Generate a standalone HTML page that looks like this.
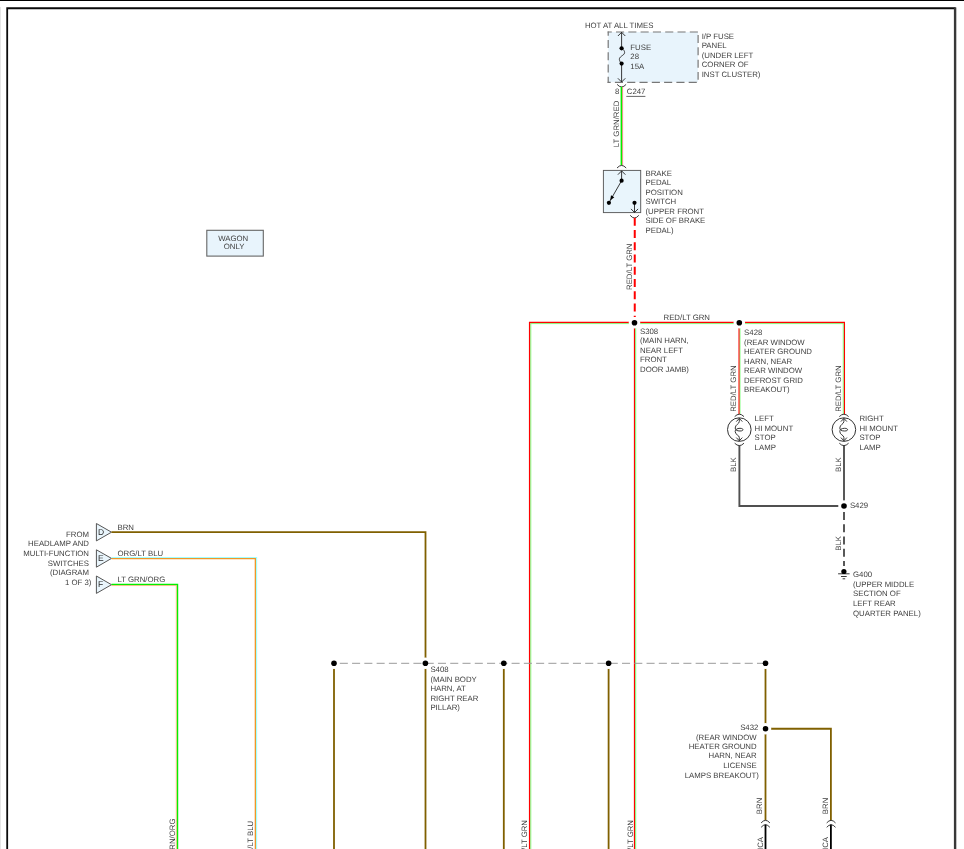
<!DOCTYPE html>
<html>
<head>
<meta charset="utf-8">
<title>Wiring Diagram</title>
<style>
html,body{margin:0;padding:0;background:#fff;}
body{width:964px;height:849px;overflow:hidden;}
svg{display:block;filter:blur(0.3px);}
text{font-family:"Liberation Sans",sans-serif;font-size:7.8px;fill:#404040;text-rendering:geometricPrecision;}
.w{fill:none;stroke-linecap:butt;}
.brn{stroke:#806000;stroke-width:1.8;}
.blk{stroke:#505050;stroke-width:1.9;}
.dot{fill:#000;stroke:#fff;stroke-width:1.6;}
.sym{fill:none;stroke:#222;stroke-width:0.9;}
</style>
</head>
<body>
<svg width="964" height="849" viewBox="0 0 964 849">
<!-- page frame -->
<rect x="0" y="0" width="964" height="1" fill="#000"/>
<rect x="0" y="7" width="0.9" height="842" fill="#e4e4e4"/>
<path d="M7.2 849 V8.25 H955.5" fill="none" stroke="#0a0a0a" stroke-width="1.8"/>
<rect x="953.9" y="7.4" width="2.4" height="842" fill="#383838"/>

<!-- FUSE PANEL -->
<g id="fuse">
<rect x="608.2" y="32" width="89.8" height="50.2" fill="#e8f4fc"/>
<g fill="none" stroke="#777" stroke-width="1.2">
<path d="M607.6 32 H698.1" stroke-dasharray="8.1 4.2" stroke-dashoffset="3.9"/>
<path d="M607.6 82.35 H697" stroke-dasharray="8.1 4.2" stroke-dashoffset="5"/>
<path d="M608.2 31.6 V82.9" stroke-dasharray="8.1 4.15" stroke-dashoffset="3.9"/>
<path d="M698.1 35.1 V79.7" stroke-dasharray="8 4.27"/>
</g>
<path class="sym" d="M621.6 32.3 V48 M621.6 63.6 V82 M617.9 36 L621.6 32.3 L625.3 36 M617.9 78.3 L621.6 82 L625.3 78.3"/>
<path class="sym" d="M621.6 48.3 C623.5 49.5 624.7 51 624.6 52.6 C624.4 54.6 622.6 55.2 621.3 56.3 C620 57.4 619.2 58.2 619.4 59.6 C619.6 61.2 620.6 62.4 621.6 63.6" stroke-width="1"/>
<circle cx="621.6" cy="48.3" r="2.1" fill="#000"/>
<circle cx="621.6" cy="63.6" r="2.1" fill="#000"/>
<path class="sym" d="M617.1 84.4 Q621.6 89.5 626.1 84.4"/>
</g>
<text x="584.9" y="28">HOT AT ALL TIMES</text>
<text x="630.3" y="50">FUSE</text>
<text x="630.3" y="59">28</text>
<text x="630.3" y="69">15A</text>
<text x="701.7" y="39">I/P FUSE</text>
<text x="701.7" y="48">PANEL</text>
<text x="701.7" y="58">(UNDER LEFT</text>
<text x="701.7" y="67">CORNER OF</text>
<text x="701.7" y="77">INST CLUSTER)</text>
<text x="615" y="94">8</text>
<text x="626.8" y="94">C247</text>
<line x1="626.3" y1="96.4" x2="645.4" y2="96.4" stroke="#555" stroke-width="0.9"/>

<!-- LT GRN/RED wire -->
<line x1="621.45" y1="86.7" x2="621.45" y2="165.3" stroke="#00f000" stroke-width="1.7"/>
<line x1="622.6" y1="86.7" x2="622.6" y2="165.3" stroke="#ff6a6a" stroke-width="0.7"/>
<text transform="translate(619.3,147.2) rotate(-90)">LT GRN/RED</text>

<!-- BRAKE SWITCH -->
<g id="switch">
<rect x="603.4" y="170.4" width="37.3" height="42.2" fill="#e9f5fc" stroke="#5a5a5a" stroke-width="0.95"/>
<path class="sym" d="M617 168 Q621.6 162.9 626.2 168"/>
<path class="sym" d="M621.6 170.8 V180.7 M617.9 174.7 L621.6 170.9 L625.4 174.7"/>
<path class="sym" d="M621.6 180.7 L608.9 202.8"/>
<path d="M610.2 200.6 L611 195.2 L614.3 197.2 Z" fill="#000"/>
<path class="sym" d="M634.5 202.8 V212.4 M631 208.9 L634.5 212.5 L638.1 208.9"/>
<path class="sym" d="M630.2 215.3 Q634.5 220.7 638.8 215.3"/>
<circle cx="621.6" cy="180.7" r="2.1" fill="#000"/>
<circle cx="608.9" cy="202.8" r="2.1" fill="#000"/>
<circle cx="634.5" cy="202.8" r="2.1" fill="#000"/>
</g>
<text x="645.5" y="176">BRAKE</text>
<text x="645.5" y="185">PEDAL</text>
<text x="645.5" y="195">POSITION</text>
<text x="645.5" y="204">SWITCH</text>
<text x="645.5" y="214">(UPPER FRONT</text>
<text x="645.5" y="223">SIDE OF BRAKE</text>
<text x="645.5" y="233">PEDAL)</text>

<!-- red dashed -->
<line x1="634.75" y1="217.65" x2="634.75" y2="317.1" stroke="#f00" stroke-width="2" stroke-dasharray="8.2 4.05"/>
<text transform="translate(632.2,290) rotate(-90)">RED/LT GRN</text>

<!-- RED/LT GRN wires -->
<g fill="none">
<path d="M634.5 322.45 H529.6 V849" stroke="#f00" stroke-width="1.35"/>
<path d="M634.5 323.6 H530.8 V849" stroke="#78ff78" stroke-width="0.9"/>
<path d="M634.5 322.45 H844.35 V414.3" stroke="#f00" stroke-width="1.35"/>
<path d="M634.5 323.6 H843.25 V414.3" stroke="#78ff78" stroke-width="0.9"/>
<line x1="634.55" y1="322.5" x2="634.55" y2="849" stroke="#f00" stroke-width="1.35"/>
<line x1="635.7" y1="322.5" x2="635.7" y2="849" stroke="#78ff78" stroke-width="1"/>
<line x1="739.12" y1="322.5" x2="739.12" y2="414.3" stroke="#f00" stroke-width="1.3"/>
<line x1="740.1" y1="322.5" x2="740.1" y2="414.3" stroke="#78ff78" stroke-width="0.75"/>
</g>
<text x="663.5" y="320">RED/LT GRN</text>
<text transform="translate(736.3,411.8) rotate(-90)">RED/LT GRN</text>
<text transform="translate(841.1,411.8) rotate(-90)">RED/LT GRN</text>

<!-- BLK wires -->
<path class="w blk" d="M739.4 445.6 V506.05 H844 M844 445.6 V506.05"/>
<line x1="844" y1="512" x2="844" y2="566" stroke="#505050" stroke-width="1.9" stroke-dasharray="8.1 4.15"/>
<text transform="translate(736.1,472) rotate(-90)">BLK</text>
<text transform="translate(840.7,472) rotate(-90)">BLK</text>
<text transform="translate(841,550.7) rotate(-90)">BLK</text>

<!-- lamps -->
<g id="lampL">
<circle cx="739.3" cy="429.6" r="11.8" fill="#fff" stroke="#333" stroke-width="1"/>
<path class="sym" d="M734.7 416.6 Q739.3 411.8 744 416.6"/>
<path class="sym" d="M734.7 443.2 Q739.3 448 744 443.2"/>
<path class="sym" d="M736.3 421.6 L739.3 418.4 L742.3 421.6 M736.3 437.6 L739.3 440.8 L742.3 437.6"/>
<path class="sym" d="M739.3 418.4 V421.5 C739.3 424 735.2 424.5 735.2 428 C735.2 430 737 431 740 431 C742.5 431 743 430.2 743 429.7 C743 429 742 428.3 740 428.3 C737 428.3 735.2 429.5 735.2 431.5 C735.2 435 739.3 435 739.3 437.5 V440.8"/>
</g>
<g transform="translate(104.6,0)">
<circle cx="739.3" cy="429.6" r="11.8" fill="#fff" stroke="#333" stroke-width="1"/>
<path class="sym" d="M734.7 416.6 Q739.3 411.8 744 416.6"/>
<path class="sym" d="M734.7 443.2 Q739.3 448 744 443.2"/>
<path class="sym" d="M736.3 421.6 L739.3 418.4 L742.3 421.6 M736.3 437.6 L739.3 440.8 L742.3 437.6"/>
<path class="sym" d="M739.3 418.4 V421.5 C739.3 424 735.2 424.5 735.2 428 C735.2 430 737 431 740 431 C742.5 431 743 430.2 743 429.7 C743 429 742 428.3 740 428.3 C737 428.3 735.2 429.5 735.2 431.5 C735.2 435 739.3 435 739.3 437.5 V440.8"/>
</g>
<text x="754.6" y="421">LEFT</text>
<text x="754.6" y="431">HI MOUNT</text>
<text x="754.6" y="440">STOP</text>
<text x="754.6" y="450">LAMP</text>
<text x="859.4" y="421">RIGHT</text>
<text x="859.4" y="431">HI MOUNT</text>
<text x="859.4" y="440">STOP</text>
<text x="859.4" y="450">LAMP</text>

<!-- ground -->
<path class="sym" d="M838.1 573.8 H849.6 M841 576.5 H846.7 M842.6 578.8 H845.2" stroke-width="1"/>

<!-- splice labels -->
<text x="640" y="334">S308</text>
<text x="640" y="343">(MAIN HARN,</text>
<text x="640" y="353">NEAR LEFT</text>
<text x="640" y="362">FRONT</text>
<text x="640" y="372">DOOR JAMB)</text>
<text x="744.1" y="335">S428</text>
<text x="744.1" y="345">(REAR WINDOW</text>
<text x="744.1" y="354">HEATER GROUND</text>
<text x="744.1" y="364">HARN, NEAR</text>
<text x="744.1" y="373">REAR WINDOW</text>
<text x="744.1" y="383">DEFROST GRID</text>
<text x="744.1" y="392">BREAKOUT)</text>
<text x="849.9" y="508">S429</text>
<text x="853" y="577">G400</text>
<text x="853" y="587">(UPPER MIDDLE</text>
<text x="853" y="596">SECTION OF</text>
<text x="853" y="606">LEFT REAR</text>
<text x="853" y="616">QUARTER PANEL)</text>

<!-- WAGON ONLY -->
<rect x="206.8" y="230.3" width="56.5" height="25.8" fill="#e8f4fc" stroke="#666" stroke-width="1.1"/>
<text x="218.2" y="241">WAGON</text>
<text x="223.7" y="249">ONLY</text>

<!-- left connectors -->
<g fill="#e9f5fc" stroke="#555" stroke-width="1">
<path d="M96.4 523.5 L111.5 532.2 L96.4 540.9 Z"/>
<path d="M96.4 549.8 L111.5 558.4 L96.4 567.2 Z"/>
<path d="M96.4 576 L111.5 584.7 L96.4 593.4 Z"/>
</g>
<text x="97.9" y="535" style="font-size:8.5px;fill:#2a2a2a">D</text>
<text x="97.9" y="561" style="font-size:8.5px;fill:#2a2a2a">E</text>
<text x="97.9" y="587" style="font-size:8.5px;fill:#2a2a2a">F</text>
<text x="89" y="537" text-anchor="end">FROM</text>
<text x="89" y="546" text-anchor="end">HEADLAMP AND</text>
<text x="89" y="556" text-anchor="end">MULTI-FUNCTION</text>
<text x="89" y="566" text-anchor="end">SWITCHES</text>
<text x="89" y="575" text-anchor="end">(DIAGRAM</text>
<text x="91.4" y="585" text-anchor="end">1 OF 3)</text>
<text x="117.5" y="530">BRN</text>
<text x="117.5" y="556">ORG/LT BLU</text>
<text x="117.5" y="582">LT GRN/ORG</text>

<!-- left wires -->
<path class="w brn" d="M111.5 532.2 H425.5 V849"/>
<path class="w" d="M111.5 558.7 H255.35 V849" stroke="#f09628" stroke-width="1.3"/>
<path class="w" d="M111.5 557.5 H256.6 V849" stroke="#a0ffff" stroke-width="1.15"/>
<path class="w" d="M111.5 584.45 H177.45 V849" stroke="#00f000" stroke-width="1.55"/>
<path class="w" d="M111.5 585.55 H176.3 V849" stroke="#ffb070" stroke-width="0.75"/>
<text transform="translate(174.7,866.3) rotate(-90)">LT GRN/ORG</text>
<text transform="translate(253.3,866.4) rotate(-90)">ORG/LT BLU</text>
<text transform="translate(527.4,866.5) rotate(-90)">RED/LT GRN</text>
<text transform="translate(632.5,866.5) rotate(-90)">RED/LT GRN</text>

<!-- dashed splice line -->
<path class="w brn" d="M334 663.2 V849 M503.8 663.2 V849 M608.6 663.2 V849 M765.5 663.2 V820.2 M765.5 728.75 H830.9 V820.2"/>
<path class="w" d="M765.5 824.6 V849 M830.9 824.6 V849" stroke="#000" stroke-width="1.8"/>
<g id="conn">
<path class="sym" d="M761.1 822.9 Q765.5 817.8 769.9 822.9"/>
<path class="sym" d="M761.1 827.3 Q765.5 822.2 769.9 827.3"/>
</g>
<g transform="translate(65.6,0)">
<path class="sym" d="M761.1 822.9 Q765.5 817.8 769.9 822.9"/>
<path class="sym" d="M761.1 827.3 Q765.5 822.2 769.9 827.3"/>
</g>
<text transform="translate(762,814.2) rotate(-90)">BRN</text>
<text transform="translate(827.6,814.2) rotate(-90)">BRN</text>
<text transform="translate(762.8,853.5) rotate(-90)">NCA</text>
<text transform="translate(828.4,853.5) rotate(-90)">NCA</text>

<text x="430.4" y="672">S408</text>
<text x="430.4" y="682">(MAIN BODY</text>
<text x="430.4" y="691">HARN, AT</text>
<text x="430.4" y="701">RIGHT REAR</text>
<text x="430.4" y="710">PILLAR)</text>
<text x="758.4" y="730" text-anchor="end">S432</text>
<text x="756.6" y="740" text-anchor="end">(REAR WINDOW</text>
<text x="756.6" y="749" text-anchor="end">HEATER GROUND</text>
<text x="756.6" y="758" text-anchor="end">HARN, NEAR</text>
<text x="756.6" y="768" text-anchor="end">LICENSE</text>
<text x="758.8" y="778" text-anchor="end">LAMPS BREAKOUT)</text>

<!-- splice dots -->
<g id="dots">
<g fill="#fff">
<circle cx="634.5" cy="322.7" r="5.8"/><circle cx="739.3" cy="322.7" r="5.8"/>
<circle cx="844" cy="506" r="5.8"/>
<circle cx="334" cy="663.3" r="5.8"/><circle cx="425.4" cy="663.3" r="5.8"/><circle cx="503.8" cy="663.3" r="5.8"/><circle cx="608.6" cy="663.3" r="5.8"/><circle cx="765.5" cy="663.3" r="5.8"/>
<circle cx="765.5" cy="728.75" r="5.8"/>
</g>
<path id="gdash" d="M339.8 663.3 H765.3" fill="none" stroke="#9a9a9a" stroke-width="1" stroke-dasharray="8.05 4.22"/>
<g fill="#000">
<circle cx="634.5" cy="322.7" r="2.8"/><circle cx="739.3" cy="322.7" r="2.8"/>
<circle cx="844" cy="506" r="2.8"/>
<circle cx="334" cy="663.3" r="2.8"/><circle cx="425.4" cy="663.3" r="2.8"/><circle cx="503.8" cy="663.3" r="2.8"/><circle cx="608.6" cy="663.3" r="2.8"/><circle cx="765.5" cy="663.3" r="2.8"/>
<circle cx="765.5" cy="728.75" r="2.8"/>
<circle cx="843.9" cy="571.5" r="2.6"/>
</g>
</g>

</svg>
</body>
</html>
